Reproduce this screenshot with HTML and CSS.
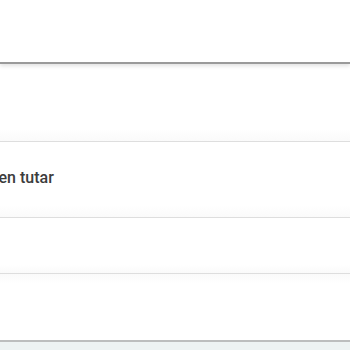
FILE: index.html
```html
<!DOCTYPE html>
<html lang="tr">
<head>
    <meta charset="UTF-8">
    <meta name="viewport" content="width=device-width, initial-scale=1.0">
    <title>Ödeme Özeti</title>
    <link rel="stylesheet" href="styles.css">
</head>
<body>
    <header class="top-bar"></header>

    <div class="summary-list">
        <div class="summary-row row-first"></div>
        <div class="summary-row row-total">
            <span class="row-label">Ödenen tutar</span>
        </div>
        <div class="summary-row row-third"></div>
        <div class="summary-row row-last"></div>
    </div>

    <div class="page-footer"></div>
</body>
</html>
```

FILE: styles.css
```css
* {
    margin: 0;
    padding: 0;
    box-sizing: border-box;
}

body {
    font-family: Roboto, 'Noto Sans', Arial, sans-serif;
    background: #eef2f2;
    overflow: hidden;
}

.top-bar {
    height: 64px;
    background: #fff;
    border-bottom: 2px solid #9a9a9a;
    box-shadow: 0 2px 4px rgba(0, 0, 0, 0.12);
    position: relative;
    z-index: 2;
}

.summary-list {
    background: #fff;
    display: flex;
    flex-direction: column;
}

.summary-row {
    border-bottom: 1px solid #dedede;
    display: flex;
    align-items: center;
    background: linear-gradient(to bottom, #fff 85%, #fafafa 100%);
}

.row-first {
    height: 78px;
}

.row-total {
    height: 76px;
    padding-bottom: 4px;
}

.row-third {
    height: 56px;
}

.row-last {
    height: 68px;
    border-bottom: 2px solid #bdbdbd;
    background: linear-gradient(to bottom, #fafafa 0, #fff 15%);
}

.row-label {
    font-size: 16px;
    font-weight: 500;
    color: #3c3c3c;
    margin-left: -39px;
    white-space: nowrap;
}

.page-footer {
    height: 20px;
}
```
